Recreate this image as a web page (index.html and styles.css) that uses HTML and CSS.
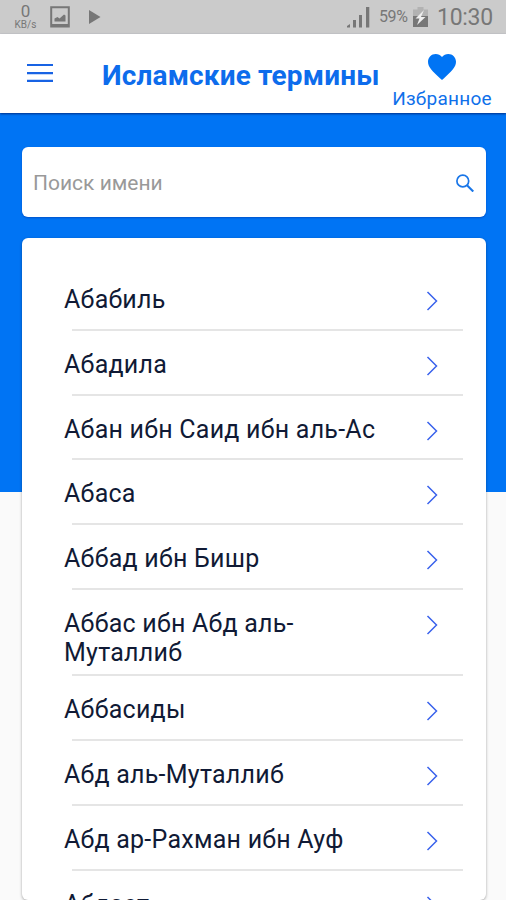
FILE: index.html
```html
<!DOCTYPE html>
<html lang="ru">
<head>
<meta charset="utf-8">
<title>Исламские термины</title>
<link rel="stylesheet" href="styles.css">
</head>
<body>
<div class="status">
  <div class="speed"><span class="speed-num">0</span><span class="speed-unit">KB/s</span></div>
  <svg class="pic" width="20" height="22" viewBox="0 0 20 22"><path d="M1.2 1.2h17.6v19.3H1.2z" fill="none" stroke="#777" stroke-width="2"/><path d="M1 18h18v3H1zM4.5 15.500v-3l3-1.500 2 1.500 4.500-4 1.500 1v6z" fill="#777"/></svg>
  <svg class="play" width="12" height="14" viewBox="0 0 12 14"><path d="M0 0l11.500 7L0 14z" fill="#777"/></svg>
  <svg class="signal" width="23" height="22" viewBox="0 0 23 22"><path d="M0 21.500v-1.500l3-2v3.500zM6 14h3v7.500H6zM12 9h3v12.500h-3zM19 1h3.300v20.500H19z" fill="#777"/></svg>
  <span class="percent">59%</span>
  <svg class="battery" width="15" height="20" viewBox="0 0 15 20"><path d="M4.500 0h6v2.500H15v7H0v-7h4.500z" fill="#b2b2b2"/><path d="M0 9h15v11H0z" fill="#777"/><path d="M11 3L2.500 11.500h4L4 18l8.500-8H8z" fill="#eee"/></svg>
  <span class="clock">10:30</span>
</div>
<header class="bar">
  <svg class="menu" width="26" height="20" viewBox="0 0 26 20"><path d="M0 2h26M0 10.200h26M0 17.800h26" stroke="#1863e4" stroke-width="2.200"/></svg>
  <h1 class="title">Исламские термины</h1>
  <div class="fav">
    <svg width="28" height="26" viewBox="2 3 20 18.350" preserveAspectRatio="none"><path d="M12 21.350l-1.450-1.320C5.400 15.360 2 12.280 2 8.500 2 5.420 4.420 3 7.500 3c1.740 0 3.410.810 4.500 2.090C13.090 3.810 14.760 3 16.500 3 19.580 3 22 5.420 22 8.500c0 3.780-3.400 6.860-8.550 11.540z" fill="#0074f4"/></svg>
    <span class="fav-label">Избранное</span>
  </div>
</header>
<main class="page">
  <div class="search">
    <span class="hint">Поиск имени</span>
    <svg width="18" height="18" viewBox="0 0 18 18"><circle cx="6.800" cy="7" r="5.900" fill="none" stroke="#1976e8" stroke-width="1.700"/><path d="M11 11.200l6.300 6.300" stroke="#1976e8" stroke-width="2.200"/></svg>
  </div>
  <ul class="list">
    <li class="row"><span class="name">Абабиль</span><svg class="arrow" viewBox="0 0 12 20"><path d="M1.500 1l9 9-9 9"/></svg></li>
    <li class="row"><span class="name">Абадила</span><svg class="arrow" viewBox="0 0 12 20"><path d="M1.500 1l9 9-9 9"/></svg></li>
    <li class="row"><span class="name">Абан ибн Саид ибн аль-Ас</span><svg class="arrow" viewBox="0 0 12 20"><path d="M1.500 1l9 9-9 9"/></svg></li>
    <li class="row"><span class="name">Абаса</span><svg class="arrow" viewBox="0 0 12 20"><path d="M1.500 1l9 9-9 9"/></svg></li>
    <li class="row"><span class="name">Аббад ибн Бишр</span><svg class="arrow" viewBox="0 0 12 20"><path d="M1.500 1l9 9-9 9"/></svg></li>
    <li class="row tall"><span class="name">Аббас ибн Абд аль-<br>Муталлиб</span><svg class="arrow" viewBox="0 0 12 20"><path d="M1.500 1l9 9-9 9"/></svg></li>
    <li class="row"><span class="name">Аббасиды</span><svg class="arrow" viewBox="0 0 12 20"><path d="M1.500 1l9 9-9 9"/></svg></li>
    <li class="row"><span class="name">Абд аль-Муталлиб</span><svg class="arrow" viewBox="0 0 12 20"><path d="M1.500 1l9 9-9 9"/></svg></li>
    <li class="row"><span class="name">Абд ар-Рахман ибн Ауф</span><svg class="arrow" viewBox="0 0 12 20"><path d="M1.500 1l9 9-9 9"/></svg></li>
    <li class="row"><span class="name">Абдаст</span><svg class="arrow" viewBox="0 0 12 20"><path d="M1.500 1l9 9-9 9"/></svg></li>
  </ul>
</main>
</body>
</html>
```
FILE: styles.css
```css
* { box-sizing: border-box; }
body {
  margin: 0;
  height: 900px;
  overflow: hidden;
  display: flex;
  flex-direction: column;
  background: #fafafa;
  font-family: Roboto, "Liberation Sans", sans-serif;
}
svg { display: block; flex: none; }
.status {
  height: 34px;
  flex: none;
  display: flex;
  align-items: flex-start;
  padding-left: 13px;
  background: #cbcbcb;
  color: #777;
}
.speed { width: 25px; display: flex; flex-direction: column; align-items: center; padding-top: 3px; }
.speed-num { font-size: 17px; line-height: 17px; }
.speed-unit { font-size: 10px; line-height: 10px; }
.pic { margin: 6px 0 0 12px; }
.play { margin: 10px 0 0 19px; }
.signal { margin: 6px 0 0 246px; }
.percent { margin-left: 9px; width: 30px; font-size: 16px; line-height: 34px; letter-spacing: -0.4px; }
.battery { margin: 7px 0 0 4px; }
.clock { margin-left: 9px; font-size: 23px; line-height: 35px; letter-spacing: -0.3px; }
.bar {
  height: 79px;
  flex: none;
  display: flex;
  align-items: flex-start;
  padding-left: 27px;
  background: #fff;
  color: #0d6cec;
  position: relative;
  box-shadow: 0 1px 2px rgba(0, 20, 90, .7);
}
.menu { margin-top: 29px; }
.title { margin: 25px 0 0 49px; width: 278px; font-size: 28px; line-height: 34px; font-weight: 700; letter-spacing: 0.15px; white-space: nowrap; }
.fav { width: 102px; margin-left: 11px; padding-top: 20px; display: flex; flex-direction: column; align-items: center; }
.fav-label { font-size: 19px; line-height: 22px; margin-top: 8px; letter-spacing: 0.25px; color: #0f70ea; }
.page {
  flex: 1;
  min-height: 0;
  display: flex;
  flex-direction: column;
  gap: 21px;
  padding: 34px 20px 0 22px;
  background: linear-gradient(#0074f4 379px, #fafafa 379px);
}
.search {
  height: 70px;
  flex: none;
  display: flex;
  align-items: center;
  justify-content: space-between;
  padding: 2px 12px 0 11px;
  background: #fff;
  border-radius: 6px;
  box-shadow: 0 1px 2px rgba(0, 20, 120, .35);
}
.hint { font-size: 21px; color: #999; }
.list {
  height: 662px;
  flex: none;
  margin: 0;
  padding: 28px 23px 0 42px;
  list-style: none;
  overflow: hidden;
  background: #fff;
  border-radius: 6px;
  box-shadow: 0 1px 3px rgba(0, 0, 0, .35);
}
.row { height: 64.800px; display: flex; justify-content: space-between; padding: 19px 25px 0 0; background: linear-gradient(#e5e5e5, #e5e5e5) 8px 100% / 100% 2px no-repeat; }
.tall { height: 86.500px; }
.name { font-size: 25px; line-height: 29.500px; letter-spacing: 0.25px; color: #101a35; white-space: nowrap; }
.arrow { width: 12px; height: 20px; margin-top: 6px; fill: none; stroke: #3a62ec; stroke-width: 1.500; }
```
